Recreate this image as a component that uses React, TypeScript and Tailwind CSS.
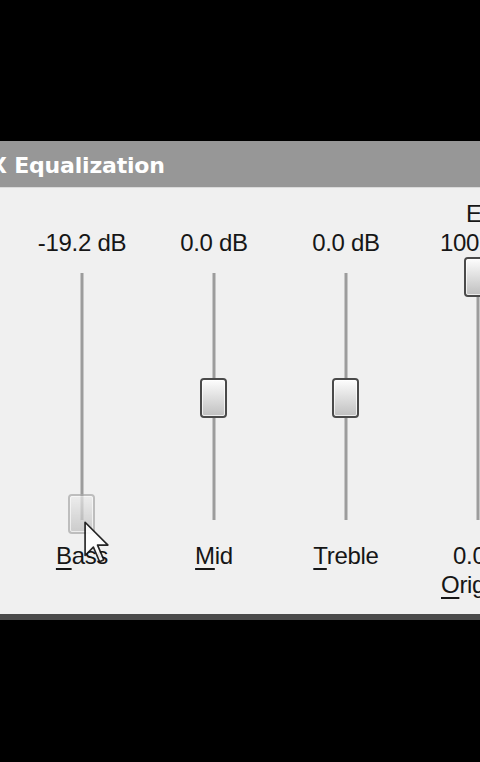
import type { ReactNode } from "react"

const font = { fontFamily: '"Liberation Sans", Arial, sans-serif' }

type Band = {
  name: string
  key: string
  rest: string
  db: number
  ghost?: boolean
}

const bands: Band[] = [
  { name: "Bass", key: "B", rest: "ass", db: -19.2, ghost: true },
  { name: "Mid", key: "M", rest: "id", db: 0 },
  { name: "Treble", key: "T", rest: "reble", db: 0 },
]

// thumb travel inside the 279px slider box
const TRAVEL = 242

function thumbTop(db: number) {
  const frac = (db + 20) / 40
  return Math.round((1 - frac) * TRAVEL)
}

function Cursor() {
  return (
    <svg
      className="absolute left-[15px] top-[263px] opacity-90"
      width="27"
      height="44"
      viewBox="0 0 13 21"
    >
      <path
        d="M1 1 L1 17 L5 13 L8 20 L10 19 L7 12 L12 12 Z"
        fill="#fff"
        stroke="#111"
        strokeWidth="0.8"
        strokeLinejoin="round"
      />
    </svg>
  )
}

function Slider({ top, ghost, children }: { top: number; ghost?: boolean; children?: ReactNode }) {
  return (
    <div className="relative h-[279px] w-[28px]">
      <div className="absolute top-[16px] bottom-[16px] left-1/2 w-[3px] -translate-x-1/2 bg-[#9c9c9c]" />
      <div
        className={`absolute left-0 h-[40px] w-[27px] rounded-[4px] border-2 bg-linear-to-b ${
          ghost
            ? "border-[#a8a8a8] from-[#ececec] to-[#bdbdbd] opacity-70"
            : "border-[#4a4a4a] from-[#fdfdfd] to-[#c0c0c0]"
        }`}
        style={{ top }}
      >
        <div className="h-full w-full rounded-[2px] border border-white/70" />
      </div>
      {children}
    </div>
  )
}

function Label({ k, rest }: { k: string; rest: string }) {
  return (
    <span>
      <span className="underline decoration-2 underline-offset-[4px]">{k}</span>
      {rest}
    </span>
  )
}

export default function App() {
  return (
    <div
      className="flex h-[762px] w-[480px] flex-col overflow-hidden bg-black text-[24px] leading-[29px] tracking-[-0.3px] text-[#161616]"
      style={font}
    >
      <div className="h-[141px] shrink-0" />

      <div className="flex h-[46px] shrink-0 items-center overflow-hidden bg-[#979797]">
        <span
          className="ml-[-10px] whitespace-nowrap pt-[2px] text-[22px] font-bold tracking-[-0.2px] text-white"
          style={{ fontFamily: '"DejaVu Sans", Verdana, sans-serif' }}
        >
          X Equalization
        </span>
      </div>
      <div className="h-px shrink-0 bg-[#dadada]" />

      <div className="flex h-[426px] shrink-0 bg-[#f0f0f0] pl-[16px] pt-[11px]">
        {bands.map((b) => (
          <div key={b.name} className="flex w-[132px] shrink-0 flex-col items-center">
            <div className="h-[29px]" />
            <div className="h-[29px] whitespace-nowrap">{b.db.toFixed(1)} dB</div>
            <Slider top={thumbTop(b.db)} ghost={b.ghost}>
              {b.ghost && <Cursor />}
            </Slider>
            <div className="mt-[5px] h-[29px] whitespace-nowrap">
              <Label k={b.key} rest={b.rest} />
            </div>
          </div>
        ))}

        <div className="flex w-[132px] shrink-0 flex-col items-center">
          <div className="h-[29px] self-start whitespace-nowrap pl-[54px]">Effect</div>
          <div className="h-[29px] self-start whitespace-nowrap pl-[28px]">100 %</div>
          <Slider top={0} />
          <div className="mt-[5px] h-[29px] self-start whitespace-nowrap pl-[41px]">0.0 %</div>
          <div className="h-[27px] self-start whitespace-nowrap pl-[29px]">
            <Label k="O" rest="riginal" />
          </div>
        </div>
      </div>

      <div className="h-[6px] shrink-0 bg-[#4b4b4b]" />
    </div>
  )
}
